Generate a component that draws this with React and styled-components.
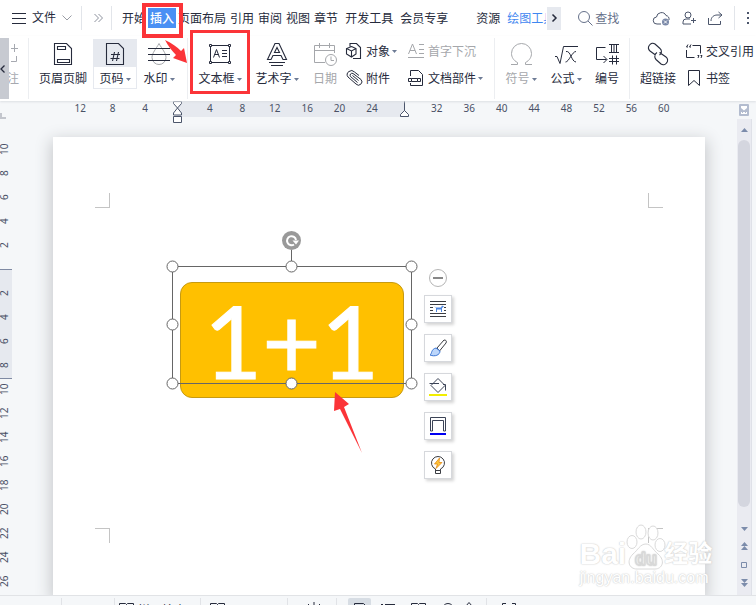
import React from 'react'
import styled, { createGlobalStyle, css } from 'styled-components'

const GlobalStyle = createGlobalStyle`
    * {
        box-sizing: border-box;
    }
    body {
        margin: 0;
        overflow: hidden;
        font-family: 'Noto Sans', 'Noto Sans CJK SC', sans-serif;
        font-size: 12px;
        color: #262b3c;
    }
    button {
        border: 0;
        padding: 0;
        background: none;
        font: inherit;
        color: inherit;
        white-space: nowrap;
    }
    svg {
        display: block;
        flex: none;
        overflow: visible;
    }
`

const Shell = styled.div`
    display: flex;
    flex-direction: column;
    height: 100vh;
    overflow: hidden;
    background: #f5f7f9;
`

const TopBar = styled.header`
    display: flex;
    align-items: center;
    flex: none;
    height: 36px;
    padding: 0 6px 0 12px;
    background: #fff;
`

const FileMenu = styled.button`
    display: flex;
    align-items: center;
    gap: 6px;
    line-height: 20px;
`

const BarDivider = styled.span`
    width: 1px;
    height: 24px;
    margin: 0 ${p => p.$gap}px;
    background: #e2e5ea;
`

const Tabs = styled.nav`
    display: flex;
    align-items: center;
    height: 20px;
`

const Tab = styled.button`
    position: relative;
    height: 20px;
    margin-left: ${p => p.$gap ?? 4}px;
    line-height: 22px;
    ${p => p.$active && css`
        z-index: 2;
        margin: 0 -2px 0 2px;
        padding: 0 2px;
        background: #4a90f4;
        color: #fff;
        font-weight: 500;
    `}
    ${p => p.$context && css`
        width: 39px;
        overflow: hidden;
        text-align: left;
        color: #3f87f0;
    `}
`

const Marker = styled.span`
    position: absolute;
    z-index: 3;
    inset: ${p => p.$inset};
    border: ${p => p.$line}px solid #fb3438;
    pointer-events: none;
`

const Scroll = styled.button`
    display: grid;
    place-items: center;
    width: 14px;
    height: 23px;
    margin-left: 1px;
    background: #e6e9ef;
`

const Search = styled.button`
    display: flex;
    align-items: center;
    gap: 2px;
    margin-left: 17px;
    color: #66718a;
`

const TopActions = styled.div`
    display: flex;
    align-items: center;
    gap: 12px;
    margin-left: auto;
`

const Ribbon = styled.section`
    position: relative;
    z-index: 1;
    display: flex;
    flex: none;
    height: 65px;
    padding-top: 3px;
    background: #fff;
    box-shadow: 0 1px 2px #dcdfe3;
`

const Collapse = styled.button`
    width: 9px;
    height: 61px;
    margin-top: -1px;
    background: #c7cad1;
`

const CutGroup = styled.div`
    width: 19px;
    overflow: hidden;
    color: #a6a9b0;
    padding-right: 9px;
`

const CutLabel = styled.span`
    display: flex;
    justify-content: flex-end;
    line-height: 24px;
`

const GroupLine = styled.span`
    width: 1px;
    height: 61px;
    margin: -1px ${p => p.$right}px 0 ${p => p.$left}px;
    background: #eceef1;
`

const Tool = styled.button`
    position: relative;
    flex: none;
    width: ${p => p.$w}px;
    height: 50px;
    color: ${p => (p.$off ? '#a5a7ab' : '#262b3c')};
    ${p => p.$on && css`
        background: linear-gradient(#e6e9ef 28px, #fff 28px);
        box-shadow: inset 0 0 0 1px #e6e9ef;
    `}
`

const ToolIcon = styled.span`
    display: grid;
    place-items: center;
    height: 28px;
    padding-top: 2px;
`

const ToolLabel = styled.span`
    display: flex;
    align-items: center;
    justify-content: center;
    gap: 2px;
    height: 22px;
    padding-top: 2px;
    line-height: 20px;
`

const Stack = styled.div`
    display: flex;
    flex-direction: column;
    gap: 3px;
    flex: none;
    width: ${p => p.$w}px;
    margin-left: ${p => p.$left || 0}px;
`

const SmallTool = styled.button`
    display: flex;
    align-items: center;
    gap: 2px;
    height: 24px;
    color: ${p => (p.$off ? '#a5a7ab' : '#262b3c')};
`

const SmallIcon = styled.span`
    display: flex;
    width: 18px;
`

const Work = styled.main`
    display: flex;
    flex: 1;
    min-height: 0;
`

const Board = styled.div`
    display: flex;
    flex-direction: column;
    flex: 1;
    min-width: 0;
`

const TopRuler = styled.div`
    position: relative;
    display: flex;
    align-items: flex-start;
    justify-content: center;
    flex: none;
    height: 36px;
    padding-left: 7px;
    color: #4a5166;
    font-size: 10px;
`

const TabStop = styled.span`
    position: absolute;
    left: 0;
    top: 12px;
    width: 6px;
    height: 6px;
    border: solid #c3c6cd;
    border-width: 0 0 2px 2px;
`

const TopScale = styled.div`
    display: grid;
    grid-template-columns: repeat(19, 1fr);
    width: 616px;
    line-height: 14px;
    text-align: center;
`

const TopBand = styled.span`
    grid-area: 1 / 4 / 2 / 12;
    height: 16px;
    margin: 0 16px;
    background: #e6e9ef;
`

const TopTick = styled.span`
    display: flex;
    justify-content: center;
    grid-area: 1 / ${p => p.$at} / 2 / auto;
    height: 16px;
`

const Field = styled.div`
    display: flex;
    flex: 1;
    min-height: 0;
`

const SideScale = styled.div`
    display: grid;
    grid-template-rows: repeat(19, 24px);
    grid-template-columns: 12px;
    flex: none;
    width: 18px;
    color: #4a5166;
    font-size: 10px;
`

const SideBand = styled.span`
    grid-area: 6 / 1 / 12 / 2;
    margin: 12px 0 22px;
    border: solid #7f8aa3;
    border-width: 1px 0;
    background: #e6e9ef;
`

const SideTick = styled.span`
    grid-area: ${p => p.$at} / 1 / auto / 2;
    width: 8px;
    writing-mode: vertical-rl;
    transform: rotate(180deg);
    line-height: 8px;
    text-align: center;
`

const Desk = styled.div`
    display: flex;
    justify-content: center;
    flex: 1;
    padding-left: 2px;
`

const Paper = styled.article`
    position: relative;
    flex: none;
    width: 652px;
    background: #fff;
    box-shadow: 0 5px 15px 2px #c6c8cb;
`

const Corner = styled.span`
    position: absolute;
    width: 15px;
    height: 15px;
    border: 0 solid #c4c4c4;
    ${p => p.$place}
`

const Shape = styled.div`
    position: absolute;
    left: 127px;
    top: 145px;
    width: 224px;
    height: 116px;
    border: 1px solid #c69a12;
    border-radius: 12px;
    background: #ffc000;
    color: #fff;
    font: 101px/114px Lato, sans-serif;
    -webkit-text-stroke: 1px #fff;
    text-align: center;
`

const Overlay = styled.svg`
    position: absolute;
    left: ${p => p.$x}px;
    top: ${p => p.$y}px;
    z-index: 3;
    pointer-events: none;
`

const Floating = styled.div`
    position: absolute;
    left: 371px;
    top: 132px;
    display: flex;
    flex-direction: column;
    align-items: center;
    gap: 11px;
`

const RoundButton = styled.button`
    display: grid;
    place-items: center;
    width: 18px;
    height: 18px;
    margin-bottom: -3px;
    border: 1px solid #b5b5b5;
    border-radius: 50%;
    background: #fff;
`

const FloatButton = styled.button`
    display: grid;
    place-items: center;
    width: 28px;
    height: 28px;
    border: 1px solid #d6d8dc;
    background: #fff;
    box-shadow: 2px 2px 3px #d4d4d4;
`

const Watermark = styled.div`
    position: absolute;
    left: 527px;
    top: 385px;
    color: #fff;
    font-family: 'Liberation Sans', 'Noto Sans CJK SC', sans-serif;
    text-shadow: 0 0 1px #ccc, 0 0 2px #d0d0d0;
    white-space: nowrap;
`

const Brand = styled.div`
    display: flex;
    align-items: flex-end;
    height: 48px;
    font-size: 30px;
    font-weight: 700;
    line-height: 32px;
`

const BrandCn = styled.span`
    font-size: 24px;
`

const Site = styled.div`
    font: 16px/16px 'Noto Sans', sans-serif;
    font-family: 'Liberation Sans', sans-serif;
`

const SideBar = styled.aside`
    display: flex;
    flex-direction: column;
    flex: none;
    width: 19px;
`

const ViewToggle = styled.button`
    display: grid;
    place-items: center;
    width: 14px;
    height: 18px;
`

const Track = styled.div`
    display: flex;
    flex-direction: column;
    align-items: center;
    flex: 1;
    width: 15px;
    padding-bottom: 6px;
    border-right: 1px solid #dfe1e8;
    background: #eaebf1;
`

const TrackButton = styled.button`
    display: grid;
    place-items: center;
    width: 14px;
    height: ${p => p.$h}px;
`

const Thumb = styled.div`
    flex: 1;
    width: 12px;
    margin-bottom: 12px;
    border-radius: 6px;
    background: #d4d6df;
`

const StatusBar = styled.footer`
    position: relative;
    display: flex;
    align-items: flex-start;
    flex: none;
    height: 26px;
    margin-bottom: -16px;
    padding: 2px 0 0 61px;
    border-top: 1px solid #e1e3e6;
    background: #f5f7f9;
`

const StatusCell = styled.div`
    display: flex;
    align-items: center;
    gap: 4px;
    flex: none;
    width: ${p => p.$w}px;
    height: 22px;
    padding-left: ${p => p.$pad || 4}px;
    border-left: 1px solid #e1e3e7;
`

const StatusText = styled.span`
    padding-top: 2px;
`

const ViewButton = styled.button`
    display: grid;
    place-items: center;
    width: ${p => p.$w || 26}px;
    height: 22px;
    border-radius: 2px;
    background: ${p => (p.$on ? '#d7dde4' : 'none')};
`

const Zoomer = styled.div`
    display: flex;
    flex: 1;
    align-items: flex-end;
    height: 22px;
    padding: 0 16px 0 40px;
`

const ZoomSlider = styled.input`
    width: 132px;
    height: 14px;
    margin: 0;
    accent-color: #4a4f5c;
`

const Icon = ({ w = 24, h = 24, children, ...rest }) => (
    <svg width={w} height={h} viewBox={`0 0 ${w} ${h}`} fill="none" stroke="currentColor" aria-hidden="true" {...rest}>
        {children}
    </svg>
)

const Caret = () => (
    <Icon w={5} h={3} stroke="none" fill="#6d7b95"><path d="M0 0h5L2.5 3z" /></Icon>
)

const icons = {
    header: (
        <Icon w={18} h={22}>
            <path d="M.5.5h12l5 5v16H.5zM3.500 3.500h8v3h-8zM3.500 16.500h12v3h-12z" strokeWidth="1.100" />
        </Icon>
    ),
    pageNo: (
        <Icon w={18} h={22}>
            <path d="M.5.5h12l5 5v16H.5zM8.500 9l-2 9M12.500 9l-2 9M5 11.500h9M4.500 15.500h9" strokeWidth="1.100" />
        </Icon>
    ),
    water: (
        <Icon w={22} h={22}>
            <path d="M11 .5C8 6 4 10 4 14.500a7 7 0 0 0 14 0C18 10 14 6 11 .5z" stroke="#a5a7ab" />
            <path d="M0 5.500h22M0 11.500h22M0 17.500h22" />
        </Icon>
    ),
    textBox: (
        <Icon w={22} h={22}>
            <path d="M1.500 2.500h19v17h-19zM4.500 14.500l3-8 3 8M5.500 11.500h4M13 7.500h5M13 10.500h5M13 13.500h5" />
            <path d="M.5 1.500h2v2h-2zM19.500 1.500h2v2h-2zM.5 18.500h2v2h-2zM19.500 18.500h2v2h-2z" fill="#fff" />
        </Icon>
    ),
    wordArt: (
        <Icon w={20} h={22}>
            <path d="M.5 16.500L8 .5h4l7.500 16h-3.500L14 12.500H6l-2 4zM10 4.500L7.500 9.500h5zM2 19.500h16M4 22.500h12" strokeWidth="1.100" />
        </Icon>
    ),
    date: (
        <Icon w={23} h={22}>
            <path d="M11 19.500H.5v-17h20V10M.5 7.500h20M5.500 0v5M15.500 0v5" />
            <circle cx="17" cy="17" r="5.500" fill="#fff" /><path d="M17 13.500v4h3" />
        </Icon>
    ),
    object: (
        <Icon w={16} h={17}>
            <path d="M4 3.500V.5h6.500l4 4v11H7M5.500 3.500l4.500 2v5.500l-4.500 3-5-3V5.500zM.5 5.500L5.500 8l4.500-2.500M5.500 8v5.500" strokeWidth="1.100" />
        </Icon>
    ),
    clip: (
        <Icon w={16} h={16}>
            <path d="M13 5.500L8.500 2A4 4 0 0 0 3 1.500 3.500 3.500 0 0 0 2 7l8 7a3.300 3.300 0 0 0 5-4.500L7 3.500A2 2 0 0 0 4.500 6.500l7 6M12.500 10.500L6.500 5.500" />
        </Icon>
    ),
    drop: (
        <Icon w={16} h={16}>
            <path d="M.5 11l4-10 4 10M2 7.500h5M11 1.500h5M11 6.500h5M11 10.500h5M0 14.500h16" />
        </Icon>
    ),
    parts: (
        <Icon w={15} h={16}>
            <path d="M2.500 6V.5h8l4 4v11h-12V13M.5 8.500h3v3h-3zM9.500 8.500h3v3h-3zM3.500 8.500h6M3.500 11.500h6" />
        </Icon>
    ),
    omega: (
        <Icon w={21} h={22}>
            <path d="M0 21.500h6.500v-2C2.500 17.500.5 14 .5 10.500a10 10 0 0 1 20 0c0 3.500-2 7-6 9v2H21" />
        </Icon>
    ),
    formula: (
        <Icon w={23} h={20}>
            <path d="M0 12.500h2l3 7L8.500 2.500H23M11 7.500c5-1 5 10 10 10.500M21 7.500c-4 0-7 10.500-10.500 10.500" />
        </Icon>
    ),
    number: (
        <Icon w={23} h={22}>
            <path d="M9.500 4.500h-9v12h10M7.500 13l3.500 3.500L7.500 20M13 1.500h10M13 9.500h10M15.500 1.500v8M18 1.500v8M20.500 1.500v8M16.500 12.500v9M20.500 12.500v9M13 15.500h10M13 18.500h10" />
        </Icon>
    ),
    link: (
        <Icon w={22} h={22} strokeWidth="1.100">
            <path d="M8.500 12L3 8a4.500 4.500 0 0 1-.5-6A4 4 0 0 1 8 1l5 4.500a4 4 0 0 1-.5 6.500M12.500 9.500L19 14a4 4 0 0 1 .5 6 4 4 0 0 1-5.500 1L9 16.500a4.500 4.500 0 0 1 1-7" />
        </Icon>
    ),
    cross: (
        <Icon w={16} h={15}>
            <path d="M6.500 1.500h8v8M.5 6v7.500h8" /><path d="M2 .5L.5 3H2M5 .5L3.500 3H5M12 14l1-2.500h-1.500M15 14l1-2.500h-1.500" />
        </Icon>
    ),
    bookmark: (
        <Icon w={16} h={16}><path d="M2.500.5h11v15L8 10.500l-5.500 5z" /></Icon>
    ),
}

const floatIcons = [
    <Icon key="wrap" w={18} h={18}>
        <path d="M1 1.500h16M1 13.500h16M1 16.500h16M1 4.500h16M1 7.500h3M15 7.500h2M1 10.500h3M15 10.500h2" stroke="#3b3d42" />
        <path d="M5 6l2 2v4h1V9.500h4V12h1V8l2-1.500-2-1-1 2H7z" stroke="none" fill="#4d86e0" />
    </Icon>,
    <Icon key="brush" w={18} h={18}>
        <path d="M8 9l7-8c2 0 3 1 2 3l-6.500 8z" stroke="#3b3d42" />
        <path d="M1 16c2-1 1-6 6-7l4 3c0 4-5 6-10 4z" fill="#bcd6fb" stroke="#3c76d4" />
    </Icon>,
    <Icon key="fill" w={18} h={18}>
        <path d="M.5 5.500H10M2 7.500L9 .5l7 7-7 7zM14 6.500h2.500v6" stroke="#3b4356" />
        <path d="M0 17h18" stroke="#f2ee00" strokeWidth="2" />
    </Icon>,
    <Icon key="outline" w={18} h={18}>
        <path d="M1.500 14V.5h15V14h-2V3.500h-11V14z" stroke="#3b4356" />
        <path d="M1 17h16" stroke="#0000f2" strokeWidth="2" />
    </Icon>,
    <Icon key="idea" w={18} h={18}>
        <path d="M6.500 14.500v-1.500a6.500 6.500 0 1 1 5 0v1.500zM6.500 17.500h5v-3h-5z" stroke="#3b3d42" />
        <path d="M10.500 2L5.500 8h3l-1.500 4.500L13 6.500h-3z" fill="#ffc53a" stroke="#e38a17" strokeWidth=".8" />
    </Icon>,
]
const floatNames = ['布局选项', '形状样式', '填充', '轮廓', '智能']

const BigTool = ({ icon, label, caret, children, ...rest }) => (
    <Tool {...rest}>
        <ToolIcon>{icons[icon]}</ToolIcon>
        <ToolLabel>{label}{caret && <Caret />}</ToolLabel>
        {children}
    </Tool>
)

const LineTool = ({ icon, label, caret, $off }) => (
    <SmallTool $off={$off}>
        <SmallIcon>{icons[icon]}</SmallIcon>
        {label}
        {caret && <Caret />}
    </SmallTool>
)

const topTicks = ['12', '8', '4', '', '4', '8', '12', '16', '20', '24', '', '32', '36', '40', '44', '48', '52', '56', '60']
const sideTicks = ['10', '8', '6', '4', '2', '', '2', '4', '6', '8', '10', '12', '14', '16', '18', '20', '22', '24', '26']
const handles = [[1, 27], [120, 27], [240, 27], [1, 85], [240, 85], [1, 144], [120, 144], [240, 144]]

const Header = () => (
    <TopBar>
        <FileMenu>
            <Icon w={14} h={12}><path d="M0 1.500h14M0 6.500h14M0 11.500h14" /></Icon>
            文件
            <Icon w={10} h={6} stroke="#9a9da5"><path d="M.5.5L5 5 9.500.5" /></Icon>
        </FileMenu>
        <BarDivider $gap={9} />
        <Icon w={10} h={8} stroke="#8d929e"><path d="M3.500 0l4 4-4 4M7.500 0l4 4-4 4" /></Icon>
        <BarDivider $gap={10} />
        <Tabs>
            <Tab $gap={0}>开始</Tab>
            <Tab $active>
                插入
                <Marker $inset="-5px -7px -10px -6px" $line={4} />
            </Tab>
            <Tab>页面布局</Tab>
            <Tab>引用</Tab>
            <Tab>审阅</Tab>
            <Tab>视图</Tab>
            <Tab>章节</Tab>
            <Tab $gap={7}>开发工具</Tab>
            <Tab $gap={7}>会员专享</Tab>
            <Tab $gap={28}>资源</Tab>
            <Tab $gap={7} $context>绘图工具</Tab>
        </Tabs>
        <Scroll aria-label="更多选项卡">
            <Icon w={5} h={8} strokeWidth="1.5"><path d="M.5.5L4 4 .5 7.500" /></Icon>
        </Scroll>
        <Search>
            <Icon w={15} h={15}><circle cx="6" cy="6" r="5.500" /><path d="M10 10l4.500 4.500" /></Icon>
            查找
        </Search>
        <TopActions>
            <Icon w={17} h={15} stroke="#4b556b">
                <path d="M8 13H4a3.500 3.500 0 0 1-.5-7A5 5 0 0 1 13 4.500a4 4 0 0 1 3 4.500" />
                <circle cx="12.500" cy="11" r="3.500" fill="#7b89a8" stroke="none" /><path d="M11 9.500l3 3M14 9.500l-3 3" stroke="#fff" />
            </Icon>
            <Icon w={14} h={14} stroke="#4b556b">
                <circle cx="6" cy="4" r="3" /><path d="M9 13H1v-2a3 3 0 0 1 3-3h4M11.500 7v5M9 9.500h5" />
            </Icon>
            <Icon w={15} h={14} stroke="#4b556b">
                <path d="M.5 7v6.500h12V10M3 10c0-4 3-6 6-6h5M10.500 1L14 4l-3.500 3" />
            </Icon>
            <BarDivider $gap={-1} />
            <Icon w={4} h={14} stroke="none" fill="#4b556b"><path d="M1 1h2v2H1zM1 6h2v2H1zM1 11h2v2H1z" /></Icon>
        </TopActions>
    </TopBar>
)

const ToolRibbon = () => (
    <Ribbon>
        <Collapse aria-label="收起">
            <Icon w={7} h={8} strokeWidth="1.300"><path d="M4.500.5L1 4l3.500 3.500" /></Icon>
        </Collapse>
        <CutGroup>
            <Icon w={10} h={28}><path d="M2 9.500h7M5.500 5v8M2 22.500h5.500V17" /></Icon>
            <CutLabel>注</CutLabel>
        </CutGroup>
        <GroupLine $left={0} $right={4} />
        <BigTool $w={60} icon="header" label="页眉页脚" />
        <BigTool $w={44} $on icon="pageNo" label="页码" caret />
        <BigTool $w={44} icon="water" label="水印" caret />
        <GroupLine $left={6} $right={2} />
        <BigTool $w={60} icon="textBox" label="文本框" caret>
            <Marker $inset="-9px 0 -5px 0" $line={3} />
        </BigTool>
        <BigTool $w={54} icon="wordArt" label="艺术字" caret />
        <BigTool $w={42} $off icon="date" label="日期" />
        <Stack $w={62}>
            <LineTool icon="object" label="对象" caret />
            <LineTool icon="clip" label="附件" />
        </Stack>
        <Stack $w={82}>
            <LineTool icon="drop" label="首字下沉" $off />
            <LineTool icon="parts" label="文档部件" caret />
        </Stack>
        <GroupLine $left={4} $right={4} />
        <BigTool $w={44} $off icon="omega" label="符号" caret />
        <BigTool $w={46} icon="formula" label="公式" caret />
        <BigTool $w={36} icon="number" label="编号" />
        <GroupLine $left={4} $right={4} />
        <BigTool $w={48} icon="link" label="超链接" />
        <Stack $w={70} $left={4}>
            <LineTool icon="cross" label="交叉引用" />
            <LineTool icon="bookmark" label="书签" />
        </Stack>
        <Overlay $x={163} $y={4} width="26" height="24" viewBox="0 0 26 24" fill="#fb3438">
            <path d="M2 0c7 3 12 7 16 11l3-3 3 15-14-5 3-3C9 11 5 6 2 0z" />
        </Overlay>
    </Ribbon>
)

const Page = () => (
    <Paper>
        <Corner $place={css`left: 42px; top: 56px; border-width: 0 1px 1px 0;`} />
        <Corner $place={css`right: 42px; top: 56px; border-width: 0 0 1px 1px;`} />
        <Corner $place={css`left: 42px; top: 391px; border-width: 1px 1px 0 0;`} />
        <Corner $place={css`right: 42px; top: 391px; border-width: 1px 0 0 1px;`} />
        <Shape>1+1</Shape>
        <Overlay $x={118} $y={102} width="242" height="152" viewBox="0 0 242 152" overflow="visible" fill="#fff" stroke="#666">
            <path d="M1.500 27.500h239v117h-239zM120.500 11v16" fill="none" />
            {handles.map(([x, y]) => <circle key={`${x}-${y}`} cx={x + 0.5} cy={y + 0.5} r="5.500" />)}
            <circle cx="120.500" cy="1.500" r="9.500" fill="#999" stroke="none" />
            <path d="M123 5.500A4.500 4.500 0 1 1 125 1" fill="none" stroke="#fff" strokeWidth="2" />
            <path d="M121.500 1.500h6.500l-3 4z" stroke="none" />
        </Overlay>
        <Overlay $x={280} $y={255} width="30" height="62" viewBox="0 0 30 62" fill="#fb3438">
            <path d="M2 0l14 12-5 3 18 46L7 17l-6 2z" />
        </Overlay>
        <Floating>
            <RoundButton aria-label="收起"><Icon w={10} h={2} stroke="#888" strokeWidth="2"><path d="M0 1h10" /></Icon></RoundButton>
            {floatIcons.map((icon, i) => <FloatButton key={floatNames[i]} aria-label={floatNames[i]}>{icon}</FloatButton>)}
        </Floating>
        <Watermark>
            <Brand>
                Bai
                <Icon w={38} h={46} stroke="#dadada" fill="#fff">
                    <ellipse cx="6" cy="18" rx="5" ry="6.500" />
                    <ellipse cx="15" cy="8" rx="5" ry="7" />
                    <ellipse cx="27" cy="9" rx="5" ry="7" />
                    <ellipse cx="34" cy="21" rx="5" ry="6.500" />
                    <path d="M20 20c5 0 7 6 12 10 8 7 4 15-3 15H11c-8 0-11-8-4-15 5-4 7-10 13-10z" />
                    <text x="20" y="41" textAnchor="middle" fontSize="18" strokeWidth=".8">du</text>
                </Icon>
                <BrandCn>经验</BrandCn>
            </Brand>
            <Site>jingyan.baidu.com</Site>
        </Watermark>
    </Paper>
)

const Arrow = ({ up, twice }) => (
    <Icon w={7} h={twice ? 8 : 4} stroke="none" fill="#7c8cab">
        <path d={up ? 'M0 4h7L3.500 0z' : 'M0 0h7L3.500 4z'} />
        {twice && <path d={up ? 'M0 8h7L3.500 4z' : 'M0 4h7L3.500 8z'} />}
    </Icon>
)

const App = () => (
    <>
        <GlobalStyle />
        <Shell>
            <Header />
            <ToolRibbon />
            <Work>
                <Board>
                    <TopRuler>
                        <TabStop />
                        <TopScale>
                            <TopBand />
                            {topTicks.map((n, i) => (
                                <TopTick key={i} $at={i + 1}>
                                    {n}
                                    {i === 3 && <Icon w={9} h={22} stroke="#4b556b" fill="#fff"><path d="M.5.5h8v2L4.500 7l4 5v2h-8v-2l4-5-4-4.500zM.5 15.500h8v6h-8z" /></Icon>}
                                    {i === 10 && <Icon w={9} h={16} stroke="#4b556b" fill="#fff"><path d="M4.500 0v10M.5 15.500v-2l4-4 4 4v2z" /></Icon>}
                                </TopTick>
                            ))}
                        </TopScale>
                    </TopRuler>
                    <Field>
                        <SideScale>
                            <SideBand />
                            {sideTicks.map((n, i) => <SideTick key={i} $at={i + 1}>{n}</SideTick>)}
                        </SideScale>
                        <Desk>
                            <Page />
                        </Desk>
                    </Field>
                </Board>
                <SideBar>
                    <ViewToggle aria-label="标尺">
                        <Icon w={10} h={12} stroke="none" fill="#b3bccf">
                            <rect width="10" height="12" rx="1" />
                            <path d="M2 2h6v2L5 6.500 2 4zM2 8h1v1h1V8h2v1h1V8h1v2H2z" fill="#fff" />
                        </Icon>
                    </ViewToggle>
                    <Track>
                        <TrackButton $h={21} aria-label="向上"><Arrow up /></TrackButton>
                        <Thumb />
                        <TrackButton $h={20} aria-label="向下"><Arrow /></TrackButton>
                        <TrackButton $h={14} aria-label="上一页"><Arrow up twice /></TrackButton>
                        <TrackButton $h={24} aria-label="浏览对象"><Icon w={6} h={6} stroke="#7c8cab"><path d="M.5.5h5v5h-5z" /></Icon></TrackButton>
                        <TrackButton $h={12} aria-label="下一页"><Arrow twice /></TrackButton>
                    </Track>
                </SideBar>
            </Work>
            <StatusBar>
                <StatusCell $w={53} />
                <StatusCell $w={86}>
                    <Icon w={15} h={12}><path d="M.5.5h6l1 1 1-1h6v11H.5zM7.500 1.500v9" /></Icon>
                    <StatusText>拼写检查</StatusText>
                </StatusCell>
                <StatusCell $w={87} $pad={9}>
                    <Icon w={15} h={12}><path d="M.5.5h6l1 1 1-1h6v11H.5zM7.500 1.500v9" /></Icon>
                </StatusCell>
                <StatusCell $w={49} $pad={18}>
                    <Icon w={16} h={14}><path d="M8 0v14M2 2l3 3M14 2l-3 3" /></Icon>
                </StatusCell>
                <StatusCell $w={150} $pad={11}>
                    <ViewButton $on $w={23} aria-label="页面视图"><Icon w={12} h={12}><path d="M.5 11.500V.5h9l2 2v9z" /></Icon></ViewButton>
                    <ViewButton aria-label="大纲"><Icon w={14} h={10}><path d="M0 .5h2M4 .5h10M4 5.500h10" /></Icon></ViewButton>
                    <ViewButton aria-label="阅读版式"><Icon w={15} h={12}><path d="M.5.5h6l1 1 1-1h6v11H.5z" /></Icon></ViewButton>
                    <ViewButton aria-label="网页版式"><Icon w={12} h={12}><circle cx="6" cy="6" r="5.500" /></Icon></ViewButton>
                    <Icon w={8} h={14}><path d="M1 4l3-3.500L7 4v9H1z" /></Icon>
                </StatusCell>
                <StatusCell $w={44} $pad={15}>
                    <Icon w={14} h={12}><path d="M4 .5H.5v11H4M10 .5h3.500v11H10" /></Icon>
                </StatusCell>
                <Zoomer><ZoomSlider type="range" defaultValue="45" aria-label="缩放" /></Zoomer>
            </StatusBar>
        </Shell>
    </>
)

export default App
